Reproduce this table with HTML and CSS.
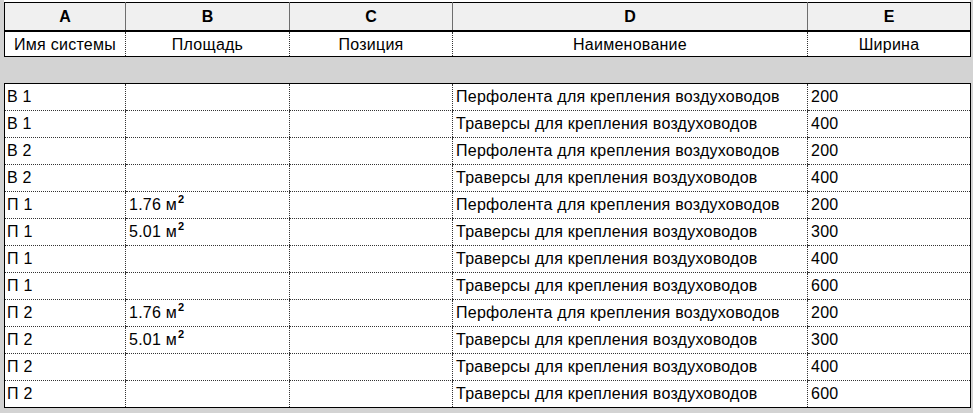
FILE: index.html
```html
<!DOCTYPE html>
<html lang="ru">
<head>
<meta charset="utf-8">
<link rel="stylesheet" href="styles.css">
</head>
<body>
<div class="sheet">
  <table class="head">
    <colgroup><col class="ca"><col class="cb"><col class="cc"><col class="cd"><col class="ce"></colgroup>
    <tr class="letters"><th>A</th><th>B</th><th>C</th><th>D</th><th>E</th></tr>
    <tr class="names"><td>Имя системы</td><td>Площадь</td><td>Позиция</td><td>Наименование</td><td>Ширина</td></tr>
  </table>
  <div class="gap"></div>
  <table class="body">
    <colgroup><col class="ca"><col class="cb"><col class="cc"><col class="cd"><col class="ce"></colgroup>
    <tr><td>В 1</td><td></td><td></td><td>Перфолента для крепления воздуховодов</td><td>200</td></tr>
    <tr><td>В 1</td><td></td><td></td><td>Траверсы для крепления воздуховодов</td><td>400</td></tr>
    <tr><td>В 2</td><td></td><td></td><td>Перфолента для крепления воздуховодов</td><td>200</td></tr>
    <tr><td>В 2</td><td></td><td></td><td>Траверсы для крепления воздуховодов</td><td>400</td></tr>
    <tr><td>П 1</td><td>1.76 м<sup>2</sup></td><td></td><td>Перфолента для крепления воздуховодов</td><td>200</td></tr>
    <tr><td>П 1</td><td>5.01 м<sup>2</sup></td><td></td><td>Траверсы для крепления воздуховодов</td><td>300</td></tr>
    <tr><td>П 1</td><td></td><td></td><td>Траверсы для крепления воздуховодов</td><td>400</td></tr>
    <tr><td>П 1</td><td></td><td></td><td>Траверсы для крепления воздуховодов</td><td>600</td></tr>
    <tr><td>П 2</td><td>1.76 м<sup>2</sup></td><td></td><td>Перфолента для крепления воздуховодов</td><td>200</td></tr>
    <tr><td>П 2</td><td>5.01 м<sup>2</sup></td><td></td><td>Траверсы для крепления воздуховодов</td><td>300</td></tr>
    <tr><td>П 2</td><td></td><td></td><td>Траверсы для крепления воздуховодов</td><td>400</td></tr>
    <tr><td>П 2</td><td></td><td></td><td>Траверсы для крепления воздуховодов</td><td>600</td></tr>
  </table>
</div>
</body>
</html>
```
FILE: styles.css
```css
html, body {
  margin: 0;
  background: #d3d3d3;
}
.sheet {
  width: 966px;
  padding: 0 3px 4px 4px;
}
.sheet::before {
  content: "";
  display: block;
  height: 2px;
  background: #fff;
}
table {
  width: 966px;
  border-collapse: collapse;
  table-layout: fixed;
  background: #fff;
}
.ca { width: 121px; }
.cb { width: 164px; }
.cc { width: 163px; }
.cd { width: 355px; }
.ce { width: 163px; }

.head {
  border: 1px solid #000;
}
.letters th {
  height: 27px;
  padding: 0;
  background: #f0f0f0;
  font: bold 16px "Liberation Sans", Arial, sans-serif;
  color: #000;
  border-left: 1px solid #6e6e6e;
  border-bottom: 2px solid #000;
  text-align: center;
  vertical-align: middle;
}
.letters th:first-child { border-left: 1px solid #000; }
.names td {
  height: 22px;
  padding: 2px 0 0;
  text-align: center;
  border-left: 1px dotted #333;
  border-bottom: 1px solid #000;
}
.names td:first-child { border-left: 1px solid #000; }

.gap { height: 26px; }

.body {
  border: 1px solid #000;
}
td {
  font: 16px "Liberation Sans", Arial, sans-serif;
  letter-spacing: 0.25px;
  color: #000;
  white-space: nowrap;
  overflow: hidden;
}
.body td {
  height: 26px;
  padding: 0 0 0 3px;
  text-align: left;
  vertical-align: middle;
  border-left: 1px dotted #333;
  border-bottom: 1px dotted #333;
}
.body td:first-child { border-left: 1px solid #000; padding-left: 2px; }
.body tr:last-child td { border-bottom: 1px solid #000; }
sup {
  font-size: 11px;
  font-weight: bold;
  vertical-align: 7px;
  line-height: 0;
  margin-left: 1px;
}
```
